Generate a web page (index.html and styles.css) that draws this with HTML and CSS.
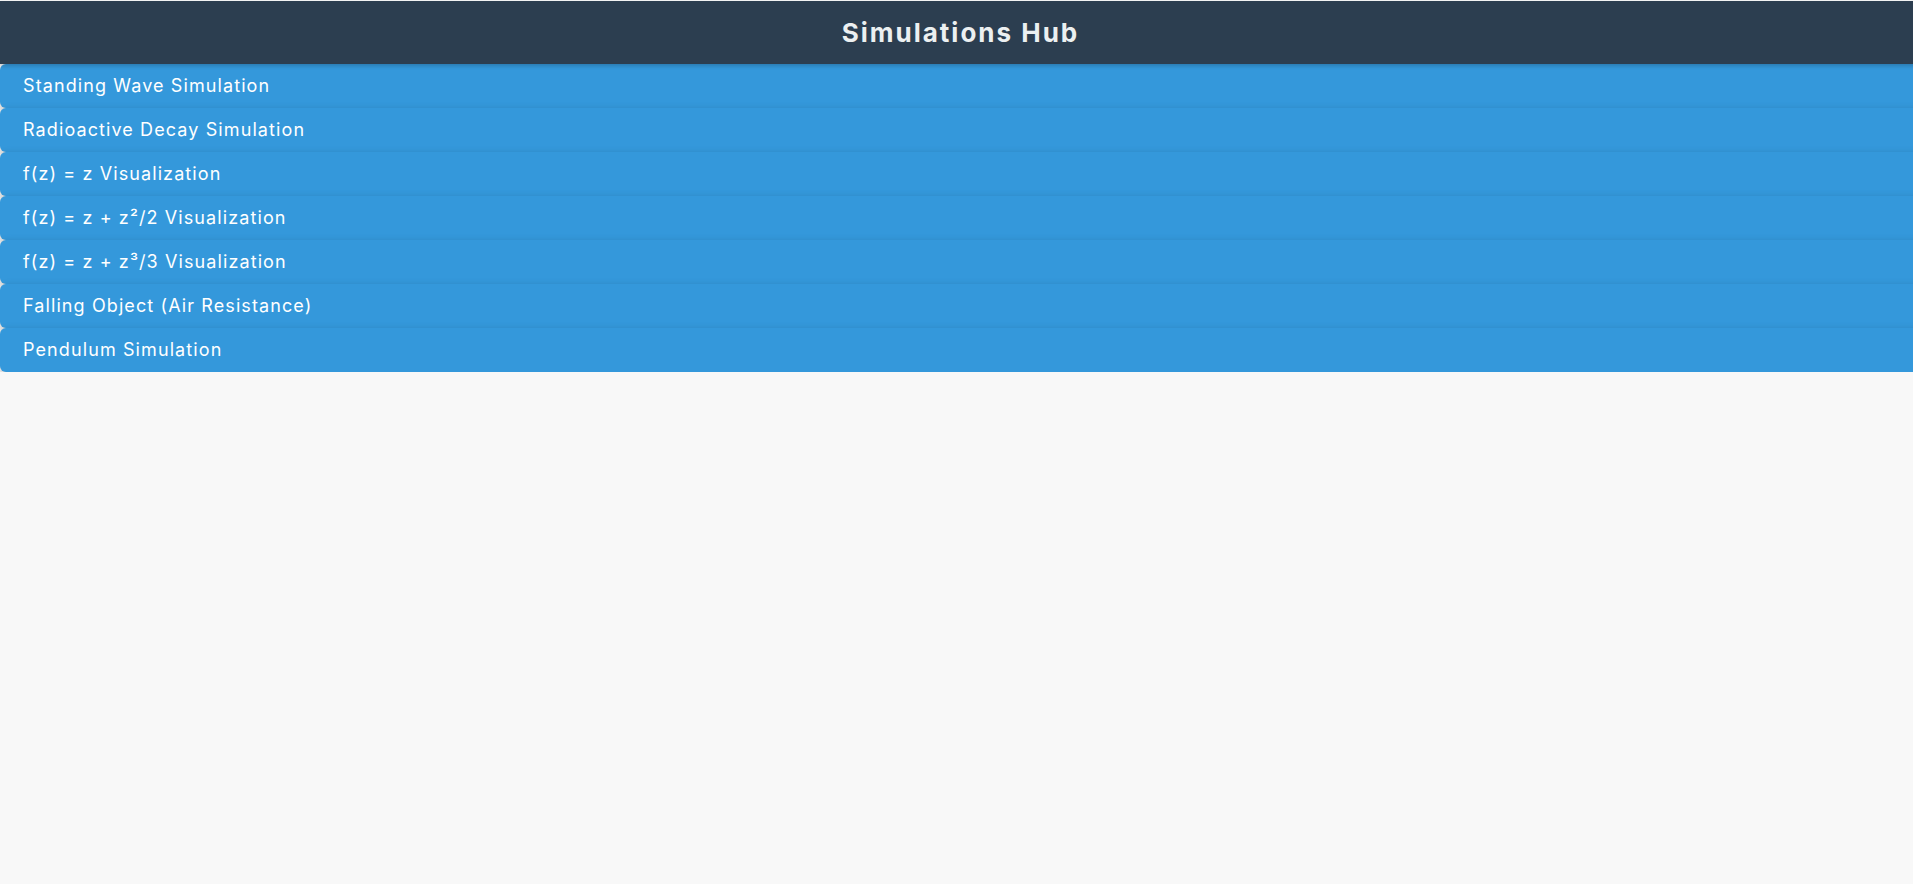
FILE: index.html
```html
<!DOCTYPE html>
<html lang="en">
<head>
<meta charset="utf-8">
<title>Simulations Hub</title>
<link rel="stylesheet" href="styles.css">
</head>
<body>
<header class="hub-header">
  <h1 class="hub-title">Simulations Hub</h1>
</header>
<nav class="sim-list">
  <a class="sim-item" href="#">Standing Wave Simulation</a>
  <a class="sim-item" href="#">Radioactive Decay Simulation</a>
  <a class="sim-item" href="#">f(z) = z Visualization</a>
  <a class="sim-item" href="#">f(z) = z + z²/2 Visualization</a>
  <a class="sim-item" href="#">f(z) = z + z³/3 Visualization</a>
  <a class="sim-item" href="#">Falling Object (Air Resistance)</a>
  <a class="sim-item" href="#">Pendulum Simulation</a>
</nav>
</body>
</html>
```
FILE: styles.css
```css
html, body {
  margin: 0;
  padding: 0;
}
body {
  background: #f8f8f8;
  font-family: Inter, "Noto Sans", sans-serif;
  overflow-x: hidden;
  padding-top: 1px;
}
.hub-header {
  background: #2c3e50;
  height: 63px;
  display: flex;
  align-items: center;
  justify-content: center;
  width: calc(100% + 8px);
  position: relative;
  z-index: 10;
  box-shadow: 0 2px 4px rgba(0, 0, 0, 0.2);
}
.hub-title {
  margin: 0;
  color: #ecf0f1;
  font-size: 26px;
  font-weight: 700;
  letter-spacing: 2px;
}
.sim-list {
  display: flex;
  flex-direction: column;
  width: calc(100% + 12px);
}
.sim-item {
  display: block;
  height: 44px;
  box-sizing: border-box;
  padding: 0 23px;
  line-height: 44px;
  background: #3498db;
  color: #ffffff;
  text-decoration: none;
  font-size: 18px;
  letter-spacing: 1.1px;
  border-radius: 6px;
  box-shadow: 0 3px 8px rgba(0, 0, 0, 0.22);
  position: relative;
}
```
